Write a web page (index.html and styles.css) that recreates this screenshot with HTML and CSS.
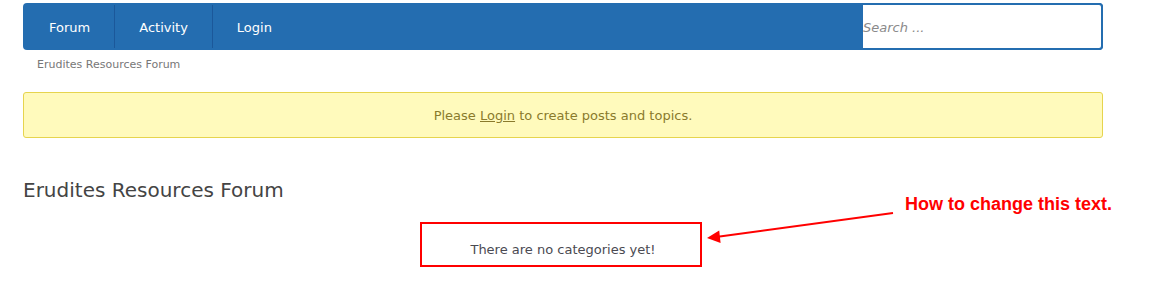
FILE: index.html
```html
<!DOCTYPE html>
<html lang="en">
<head>
<meta charset="utf-8">
<title>Erudites Resources Forum</title>
<link rel="stylesheet" href="styles.css">
</head>
<body>
<div class="page">
  <nav class="navbar">
    <a class="nav-item first sep" href="#">Forum</a>
    <a class="nav-item sep" href="#">Activity</a>
    <a class="nav-item" href="#">Login</a>
    <input class="search" type="text" placeholder="Search ...">
  </nav>
  <div class="breadcrumb">Erudites Resources Forum</div>
  <div class="alert">Please <a href="#">Login</a> to create posts and topics.</div>
  <h1 class="title">Erudites Resources Forum</h1>
  <div class="empty">There are no categories yet!</div>
</div>
<div class="annotation">
  <svg class="arrow" width="1160" height="305" viewBox="0 0 1160 305" xmlns="http://www.w3.org/2000/svg">
    <line x1="893" y1="213" x2="716" y2="237" stroke="#ff0000" stroke-width="2"/>
    <polygon points="707,238 720.6,243 719.2,230.6" fill="#ff0000"/>
  </svg>
  <div class="note">How to change this text.</div>
</div>
</body>
</html>
```
FILE: styles.css
```css
html, body {
  margin: 0;
  padding: 0;
  background: #ffffff;
}
body {
  position: relative;
  width: 1160px;
  height: 305px;
  overflow: hidden;
  font-family: "DejaVu Sans", Verdana, sans-serif;
}
.page {
  width: 1080px;
  padding: 3px 0 0 23px;
}
.navbar {
  display: flex;
  align-items: stretch;
  height: 47px;
  background: #246db0;
  border-radius: 4px;
}
.nav-item {
  display: block;
  padding: 2px 24px 0 24px;
  margin: 2px 0;
  line-height: 41px;
  font-size: 13px;
  color: #ffffff;
  text-decoration: none;
}
.nav-item.first {
  padding-left: 26px;
}
.nav-item.sep {
  border-right: 1px solid #1b589a;
}
.search {
  margin-left: auto;
  width: 240px;
  height: 47px;
  box-sizing: border-box;
  border: 2px solid #246db0;
  border-left: 0;
  border-radius: 0 4px 4px 0;
  background: #ffffff;
  padding: 2px 0 0 0;
  font-family: "DejaVu Sans", Verdana, sans-serif;
  font-size: 13px;
  outline: none;
}
.search::placeholder {
  color: #8a8a8a;
  font-style: italic;
}
.breadcrumb {
  margin-top: 8px;
  padding-left: 14px;
  font-size: 11px;
  line-height: 14px;
  color: #777777;
}
.alert {
  margin-top: 20px;
  height: 46px;
  box-sizing: border-box;
  border: 1px solid #e6d44e;
  border-radius: 3px;
  background: #fffabc;
  text-align: center;
  padding-top: 1px;
  line-height: 43px;
  font-size: 13px;
  color: #8a7a2c;
}
.alert a {
  color: #8a7a2c;
  text-decoration: underline;
}
.title {
  margin: 40px 0 0 0;
  font-size: 20px;
  line-height: 24px;
  font-weight: normal;
  color: #444444;
}
.empty {
  width: 282px;
  box-sizing: border-box;
  margin: 20px 0 0 397px;
  border: 2px solid #ff0000;
  padding: 18px 0 7px 4px;
  text-align: center;
  font-size: 13px;
  line-height: 16px;
  color: #4a4a52;
}
.annotation {
  position: absolute;
  left: 0;
  top: 0;
  width: 1160px;
  height: 305px;
  pointer-events: none;
}
.arrow {
  position: absolute;
  left: 0;
  top: 0;
}
.note {
  position: absolute;
  left: 905px;
  top: 195px;
  font-family: "Liberation Sans", Arial, sans-serif;
  font-weight: bold;
  font-size: 18px;
  line-height: 18px;
  color: #ff0000;
  white-space: nowrap;
}
```
